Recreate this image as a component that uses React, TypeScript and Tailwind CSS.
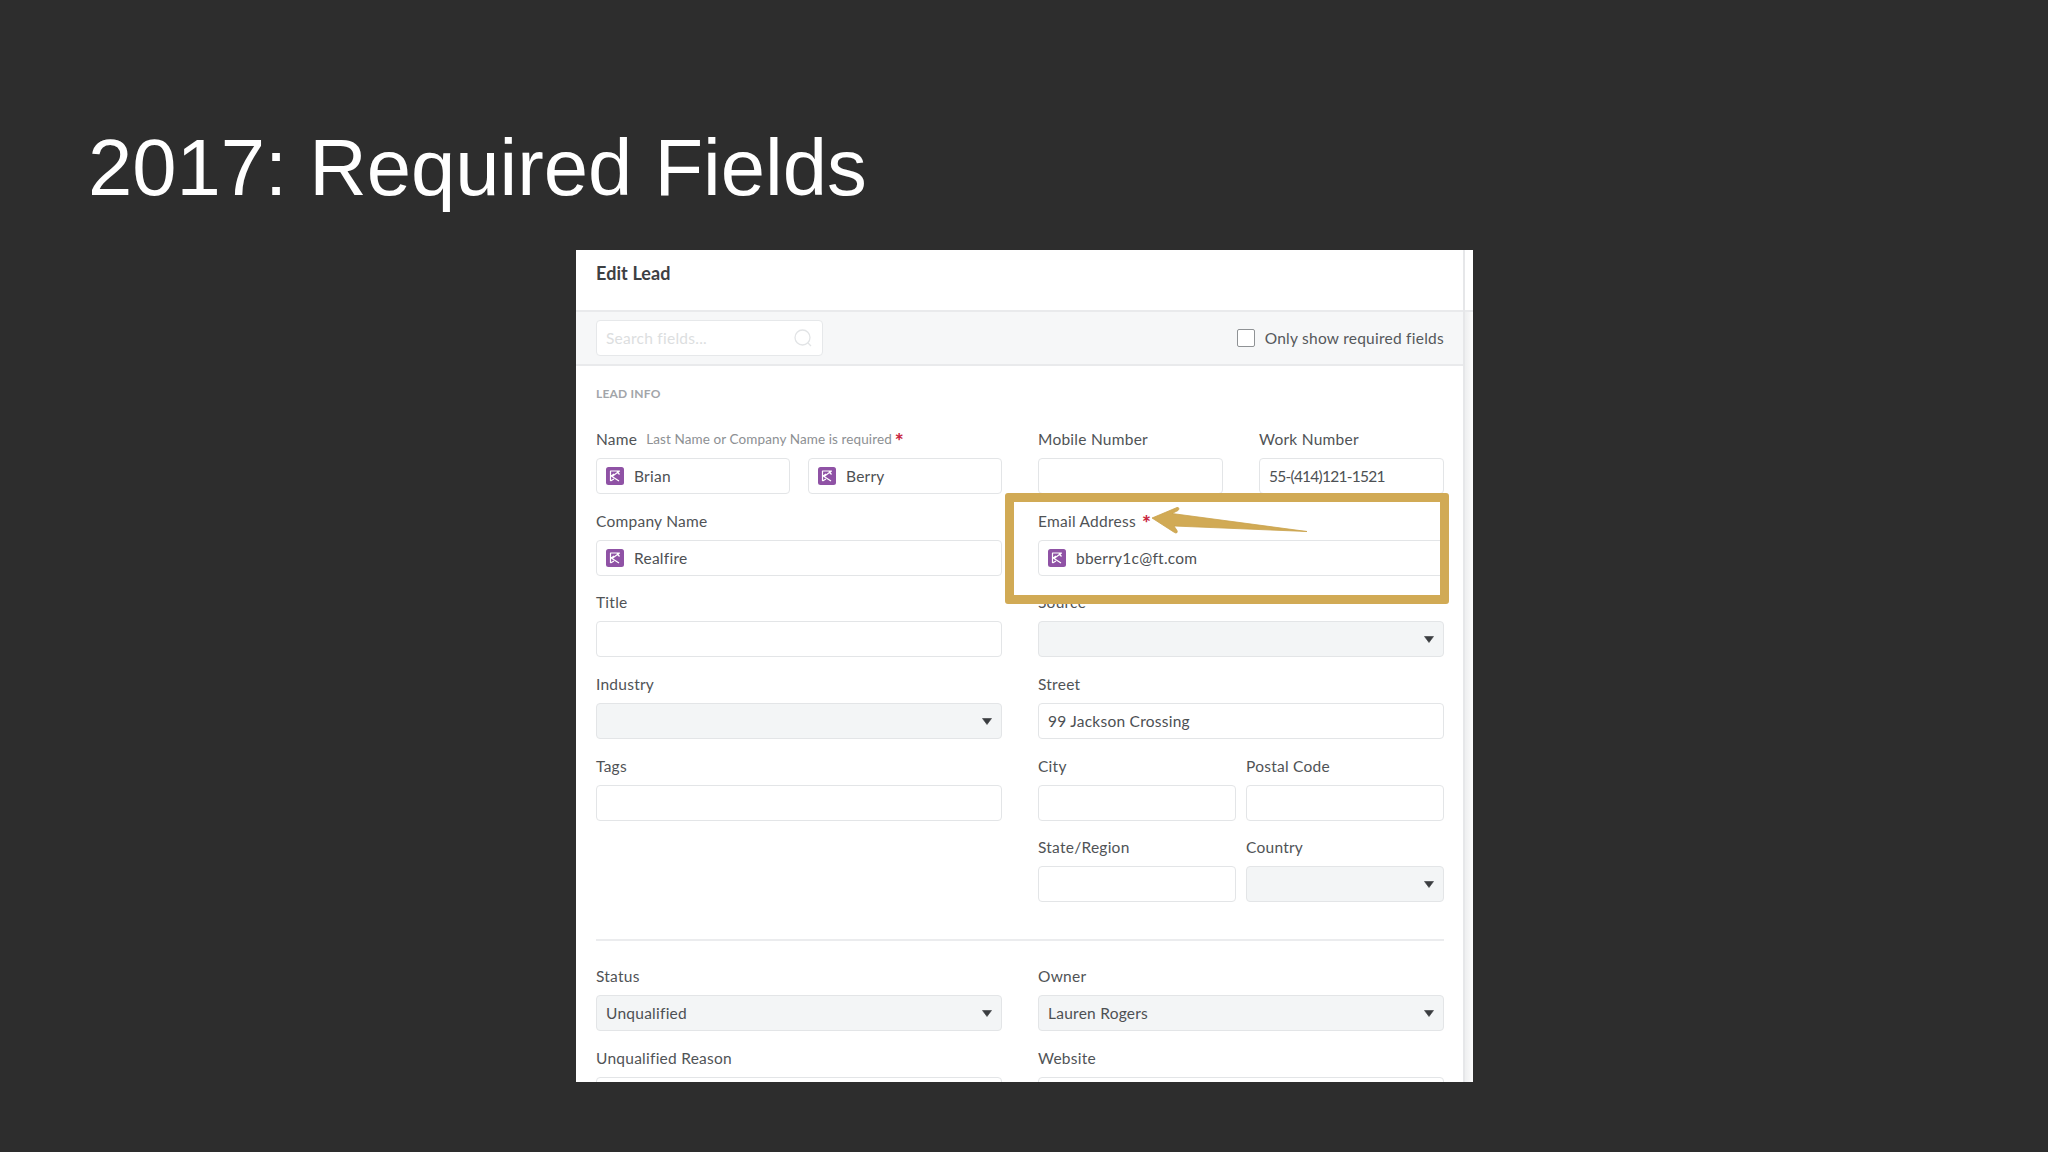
import type { ReactNode } from "react";

// Small purple contact mark shown inside enriched inputs
function EnrichIcon() {
  return (
    <svg width="18" height="18" viewBox="0 0 18 18" className="shrink-0">
      <rect width="18" height="18" rx="2.5" fill="#8f52a5" />
      <path
        d="M4.5 14V4H13.5L6 9.5L13 14M4.5 9.5L8 7M8 12L4.5 14M11 4.5L13.5 7.5"
        fill="none"
        stroke="#fff"
        strokeWidth="1.2"
        strokeLinejoin="round"
      />
    </svg>
  );
}

function Caret() {
  return (
    <svg width="10" height="7" viewBox="0 0 10 7" className="mt-[1px] shrink-0">
      <path d="M0.5 0.5H9.5L5 6.5Z" fill="#3a3d40" stroke="#3a3d40" strokeWidth="0.6" strokeLinejoin="round" />
    </svg>
  );
}

function TextInput({ value, icon }: { value?: ReactNode; icon?: boolean }) {
  return (
    <div className="flex h-[36px] w-full items-center gap-[10px] rounded-[4px] border border-[#e3e5e7] bg-white px-[9px] text-[15.5px] tracking-[0.25px] text-[#4d5053]">
      {icon && <EnrichIcon />}
      {value && <span className="pt-[1px]">{value}</span>}
    </div>
  );
}

function SelectInput({ value }: { value?: string }) {
  return (
    <div className="flex h-[36px] w-full items-center justify-between rounded-[4px] border border-[#e3e5e7] bg-[#f3f5f6] px-[9px] text-[15.5px] tracking-[0.25px] text-[#4d5053]">
      <span className="pt-[1px]">{value}</span>
      <Caret />
    </div>
  );
}

function Field({ label, children }: { label: ReactNode; children: ReactNode }) {
  return (
    <div className="h-[81.7px] min-w-0">
      <div className="mb-[10px] flex h-[17px] items-center whitespace-nowrap text-[15.5px] tracking-[0.25px] text-[#505356]">
        {label}
      </div>
      {children}
    </div>
  );
}

function Required({ className }: { className?: string }) {
  return <span className={`translate-y-[1px] text-[21px] font-black leading-none text-[#c9273f] ${className}`}>*</span>;
}

export default function App() {
  return (
    <div className="h-[1152px] w-[2048px] overflow-hidden bg-[#2d2d2d] font-['Lato',sans-serif]">
      <h1 className="pl-[88px] pt-[122px] font-['Liberation_Sans',Arial,sans-serif] text-[79.6px] leading-[92px] text-white">
        2017: Required Fields
      </h1>

      <div className="relative ml-[576px] mt-[36px] flex h-[832px] w-[897px] overflow-hidden bg-white">
        <div className="w-[887px] shrink-0">
          <div className="h-[60px] pl-[20px] pt-[13px] text-[18px] font-bold leading-[20px] tracking-[0.1px] text-[#3d4043]">Edit Lead</div>

          <div className="flex h-[56px] items-center justify-between border-y-2 border-[#e9eaec] bg-[#f6f7f8] pl-[20px] pr-[19px]">
            <div className="flex h-[36px] w-[227px] items-center justify-between rounded-[4px] border border-[#e6e8ea] bg-white px-[9px] text-[15.5px] tracking-[0.25px] text-[#dcdee0]">
              <span className="pt-[1px]">Search fields...</span>
              <svg width="20" height="20" viewBox="0 0 20 20" fill="none" stroke="#e2e4e6" strokeWidth="1.3">
                <circle cx="9.5" cy="9.5" r="7.5" />
                <path d="M15 15l3 3" />
              </svg>
            </div>
            <div className="flex items-center gap-[10px] text-[15.5px] tracking-[0.25px] text-[#55585b]">
              <span className="h-[18px] w-[18px] rounded-[2px] border border-[#8f9295] bg-white" />
              <span className="pt-[1px]">Only show required fields</span>
            </div>
          </div>

          <div className="pl-[20px] pr-[19px]">
            <div className="flex h-[65px] items-start pt-[20px] text-[12px] font-bold uppercase leading-[16px] tracking-[0.2px] text-[#a2a5a9]">
              Lead Info
            </div>

            <div className="grid grid-cols-2 gap-x-[36px]">
              <Field
                label={
                  <>
                    <span>Name</span>
                    <span className="ml-[9px] text-[13.5px] tracking-[0.1px] text-[#8d9093]">Last Name or Company Name is required</span>
                    <Required className="ml-[3px]" />
                  </>
                }
              >
                <div className="grid grid-cols-2 gap-x-[18px]">
                  <TextInput icon value="Brian" />
                  <TextInput icon value="Berry" />
                </div>
              </Field>
              <div className="grid grid-cols-2 gap-x-[36px]">
                <Field label="Mobile Number">
                  <TextInput />
                </Field>
                <Field label="Work Number">
                  <TextInput value={<span className="tracking-[-0.75px]">55-(414)121-1521</span>} />
                </Field>
              </div>

              <Field label="Company Name">
                <TextInput icon value="Realfire" />
              </Field>
              <Field
                label={
                  <>
                    <span>Email Address</span>
                    <Required className="ml-[6px]" />
                  </>
                }
              >
                <TextInput icon value="bberry1c@ft.com" />
              </Field>

              <Field label="Title">
                <TextInput />
              </Field>
              <Field label="Source">
                <SelectInput />
              </Field>

              <Field label="Industry">
                <SelectInput />
              </Field>
              <Field label="Street">
                <TextInput value="99 Jackson Crossing" />
              </Field>

              <Field label="Tags">
                <TextInput />
              </Field>
              <div className="grid grid-cols-2 gap-x-[10px]">
                <Field label="City">
                  <TextInput />
                </Field>
                <Field label="Postal Code">
                  <TextInput />
                </Field>
              </div>

              <div />
              <div className="grid grid-cols-2 gap-x-[10px]">
                <Field label="State/Region">
                  <TextInput />
                </Field>
                <Field label="Country">
                  <SelectInput />
                </Field>
              </div>
            </div>

            <div className="mb-[27px] mt-[18px] border-t-2 border-[#ebecee]" />

            <div className="grid grid-cols-2 gap-x-[36px]">
              <Field label="Status">
                <SelectInput value="Unqualified" />
              </Field>
              <Field label="Owner">
                <SelectInput value="Lauren Rogers" />
              </Field>
              <Field label="Unqualified Reason">
                <TextInput />
              </Field>
              <Field label="Website">
                <TextInput />
              </Field>
            </div>
          </div>
        </div>

        {/* Scrollbar gutter of the captured dialog */}
        <div className="flex flex-1 flex-col border-l-2 border-[#e6e7e9]">
          <div className="h-[60px] bg-white" />
          <div className="flex-1 border-t-2 border-[#e9eaec] bg-gradient-to-r from-[#eeeff0] to-[#fcfcfc]" />
        </div>

        {/* Annotation drawn on top of the form */}
        <div className="pointer-events-none absolute left-[429px] top-[243px] h-[111px] w-[444px] rounded-[3px] border-[9px] border-[#d1aa55]" />
        <svg className="pointer-events-none absolute left-[570px] top-[251px]" width="170" height="40" viewBox="0 0 170 40">
          <path
            d="M6 17L31 6.5C33 6 33.5 8 32 9.5L26 12.5L161 30.5L28 25L31 29.5C32 32 30 32.5 28.5 31.5Z"
            fill="#d1aa55"
            stroke="#c9a24c"
            strokeWidth="0.8"
            strokeLinejoin="round"
          />
        </svg>
      </div>
    </div>
  );
}
